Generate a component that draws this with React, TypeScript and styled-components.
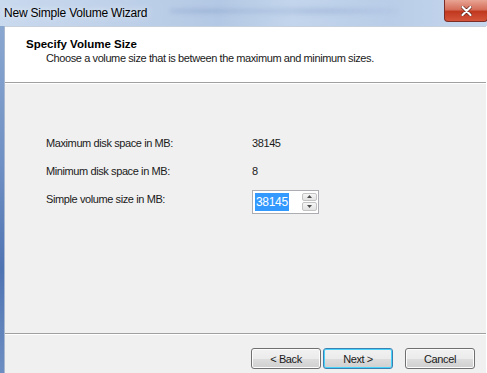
import styled, { createGlobalStyle } from "styled-components";

const Global = createGlobalStyle`
  html, body { margin: 0; padding: 0; background: #f0f0f0; }
  body { font-family: "Liberation Sans", Arial, sans-serif; font-size: 11px; color: #000; }
`;

const Window = styled.div`
  width: 487px;
  height: 373px;
  display: flex;
  flex-direction: column;
  overflow: hidden;
  background: #f0f0f0;
`;

const TitleBar = styled.div`
  height: 26px;
  flex: none;
  display: flex;
  align-items: flex-start;
  justify-content: space-between;
  background: linear-gradient(90deg, #c9d9ee 0%, #bccfe8 30%, #b3c8e4 45%, #c3d5ec 60%, #b9cde8 80%, #c6d7ed 100%);
  position: relative;
`;

const TitleText = styled.div`
  padding: 6px 0 0 4px;
  font-size: 12px;
  letter-spacing: -0.2px;
  color: #000;
  text-shadow: 0 0 6px rgba(255, 255, 255, 0.9);
`;

const Smudges = styled.div`
  position: absolute;
  top: 4px;
  left: 170px;
  width: 230px;
  height: 14px;
  background: radial-gradient(ellipse at 15% 50%, rgba(80, 110, 170, 0.3), transparent 30%),
    radial-gradient(ellipse at 65% 50%, rgba(90, 120, 180, 0.25), transparent 45%);
  filter: blur(2px);
`;

const CloseButton = styled.div`
  width: 42px;
  height: 21px;
  margin-right: -1px;
  border: 1px solid #7a2e27;
  border-top: none;
  border-radius: 0 0 4px 4px;
  background: linear-gradient(180deg, #e8a493 0%, #d56f5b 45%, #c0391f 55%, #d4553b 100%);
  display: flex;
  align-items: center;
  justify-content: center;
  z-index: 1;
`;

const Frame = styled.div`
  flex: 1;
  display: flex;
  min-height: 0;
`;

const LeftBorder = styled.div`
  width: 4px;
  flex: none;
  background: linear-gradient(180deg, #8aa7d0 0%, #6f90c4 40%, #4f74b2 70%, #6d8ec2 100%);
  border-right: 1px solid #a9b8cf;
`;

const Panel = styled.div`
  flex: 1;
  display: flex;
  flex-direction: column;
  border-right: 1px solid #ffffff;
`;

const Header = styled.div`
  height: 56px;
  flex: none;
  background: #ffffff;
  padding: 10px 0 0 21px;
  box-sizing: border-box;
  border-top: 1px solid #c8d0da;
`;

const HeaderTitle = styled.div`
  font-weight: bold;
  font-size: 11.5px;
  line-height: 14px;
`;

const HeaderSub = styled.div`
  padding-left: 20px;
  font-size: 11px;
  letter-spacing: -0.4px;
  line-height: 14px;
  color: #1a1a1a;
`;

const Separator = styled.div`
  height: 1px;
  flex: none;
  background: #a0a0a0;
  border-bottom: 1px solid #ffffff;
`;

const Body = styled.div`
  flex: 1;
  padding: 45px 0 0 41px;
  display: grid;
  grid-template-columns: 206px auto;
  grid-auto-rows: 28px;
  align-content: start;
  align-items: center;
  font-size: 11px;
  letter-spacing: -0.4px;
  color: #1a1a1a;
`;

const Label = styled.div``;

const Value = styled.div``;

const SpinBox = styled.div`
  display: flex;
  width: 67px;
  height: 24px;
  margin-top: 5px;
  box-sizing: border-box;
  border: 1px solid #abadb3;
  background: #ffffff;
  padding: 2px 1px 2px 2px;
`;

const SpinInput = styled.div`
  flex: 1;
  display: flex;
  align-items: center;
`;

const Selected = styled.span`
  background: #3399ff;
  color: #ffffff;
  font-size: 12px;
  letter-spacing: -0.3px;
  line-height: 18px;
  padding: 0 1px;
`;

const SpinButtons = styled.div`
  width: 15px;
  display: flex;
  flex-direction: column;
  gap: 1px;
`;

const SpinArrow = styled.div`
  flex: 1;
  border: 1px solid #c3c3c3;
  border-radius: 2px;
  background: linear-gradient(180deg, #f6f6f6, #e2e2e2);
  display: flex;
  align-items: center;
  justify-content: center;
`;

const Footer = styled.div`
  height: 38px;
  flex: none;
  display: flex;
  align-items: flex-start;
  padding: 13px 0 0 246px;
  box-sizing: border-box;
`;

const Button = styled.div<{ $focused?: boolean; $gap?: number }>`
  width: 70px;
  height: 21px;
  box-sizing: border-box;
  margin-left: ${(p) => p.$gap ?? 0}px;
  border: 1px solid ${(p) => (p.$focused ? "#3c7fb1" : "#707070")};
  border-radius: 3px;
  background: linear-gradient(180deg, #f2f2f2 0%, #ebebeb 50%, #dddddd 51%, #cfcfcf 100%);
  box-shadow: inset 0 0 0 1px ${(p) => (p.$focused ? "#48d3fb" : "#fcfcfc")};
  display: flex;
  align-items: center;
  justify-content: center;
  font-size: 11px;
  letter-spacing: -0.4px;
  color: #1a1a1a;
`;

export default function App() {
  return (
    <>
      <Global />
      <Window>
        <TitleBar>
          <Smudges />
          <TitleText>New Simple Volume Wizard</TitleText>
          <CloseButton>
            <svg width="11" height="10" viewBox="0 0 11 10">
              <path d="M1.5 1 L9.5 9 M9.5 1 L1.5 9" stroke="#5a1a12" strokeWidth="3.4" strokeLinecap="round" />
              <path d="M1.5 1 L9.5 9 M9.5 1 L1.5 9" stroke="#ffffff" strokeWidth="2.2" strokeLinecap="round" />
            </svg>
          </CloseButton>
        </TitleBar>
        <Frame>
          <LeftBorder />
          <Panel>
            <Header>
              <HeaderTitle>Specify Volume Size</HeaderTitle>
              <HeaderSub>Choose a volume size that is between the maximum and minimum sizes.</HeaderSub>
            </Header>
            <Separator />
            <Body>
              <Label>Maximum disk space in MB:</Label>
              <Value>38145</Value>
              <Label>Minimum disk space in MB:</Label>
              <Value>8</Value>
              <Label>Simple volume size in MB:</Label>
              <SpinBox>
                <SpinInput>
                  <Selected>38145</Selected>
                </SpinInput>
                <SpinButtons>
                  <SpinArrow>
                    <svg width="5" height="3" viewBox="0 0 5 3">
                      <path d="M0 3 L2.5 0 L5 3 Z" fill="#4d4d4d" />
                    </svg>
                  </SpinArrow>
                  <SpinArrow>
                    <svg width="5" height="3" viewBox="0 0 5 3">
                      <path d="M0 0 L5 0 L2.5 3 Z" fill="#4d4d4d" />
                    </svg>
                  </SpinArrow>
                </SpinButtons>
              </SpinBox>
            </Body>
            <Separator />
            <Footer>
              <Button>&lt; Back</Button>
              <Button $focused $gap={2}>Next &gt;</Button>
              <Button $gap={12}>Cancel</Button>
            </Footer>
          </Panel>
        </Frame>
      </Window>
    </>
  );
}
